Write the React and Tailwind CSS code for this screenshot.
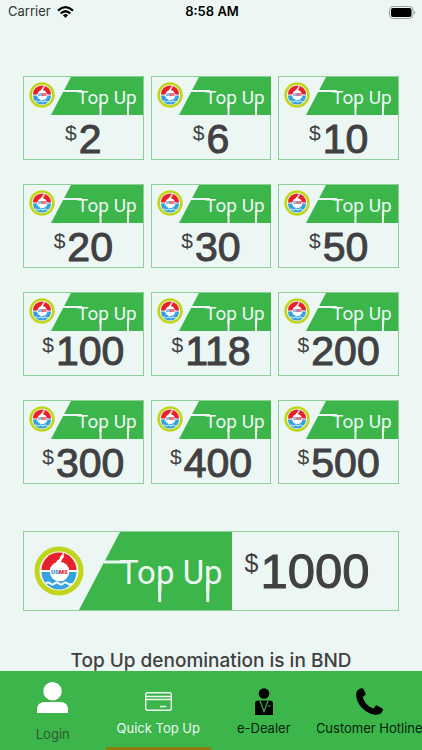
import React from "react";

const rows = [
  { amounts: [2, 6, 10], pad: "pt-1" },
  { amounts: [20, 30, 50], pad: "pt-1" },
  { amounts: [100, 118, 200], pad: "pb-1" },
  { amounts: [300, 400, 500], pad: "pt-1" },
];

function Logo({ className }) {
  return (
    <svg viewBox="0 0 50 50" className={className} role="img" aria-label="USMS logo">
      <circle cx="25" cy="25" r="22" fill="#fbfdf4" stroke="#c0d51b" strokeWidth="5" />
      <path d="M7.5 24 A17.5 17.5 0 0 1 42.5 24 Z" fill="#e6212b" />
      <path d="M7.5 26 A17.5 17.5 0 0 0 42.5 26 Z" fill="#35a1df" />
      <path
        d="M12 37.500 q2 -2 4.300 0 t4.300 0 t4.300 0 t4.300 0 t4.300 0 t4.300 0"
        fill="none"
        stroke="#ffffff"
        strokeWidth="1.800"
      />
      <circle cx="25.500" cy="25.500" r="9.800" fill="#ffffff" />
      <path d="M22 17 C23 13 26 14 26 11 L30 6 C29 10 31 11 28 13 C29 15 25 15 27 18 Z" fill="#ffffff" />
      <text
        x="25.500"
        y="27.500"
        textAnchor="middle"
        fontFamily="Roboto, 'Liberation Sans', sans-serif"
        fontWeight="900"
        fontSize="6"
      >
        <tspan fill="#2b8fd0">US</tspan>
        <tspan fill="#e6212b">MS</tspan>
      </text>
    </svg>
  );
}

function SmallBanner() {
  return (
    <svg viewBox="0 0 92 38" className="h-[38px] w-[92px] shrink-0">
      <path d="M20 0 H92 V38 H0 Z" fill="#3cb54a" />
      <path d="M12 14 H31" stroke="#ecf7f4" strokeWidth="2" />
      <path d="M49.500 26 V38 M77 26 V38" stroke="#ecf7f4" strokeWidth="2" />
      <text x="26" y="27" fill="#ecf7f4" fontFamily="Roboto, 'Liberation Sans', sans-serif" fontSize="19">
        Top Up
      </text>
    </svg>
  );
}

function LargeBanner() {
  return (
    <svg viewBox="0 0 153 78" className="h-[78px] w-[153px] shrink-0">
      <path d="M41 0 H153 V78 H0 Z" fill="#3cb54a" />
      <path d="M25 30 H50" stroke="#ecf7f4" strokeWidth="3" />
      <path d="M80.700 50 V70 M128.800 50 V70" stroke="#ecf7f4" strokeWidth="3" />
      <text x="40" y="52" fill="#ecf7f4" fontFamily="Roboto, 'Liberation Sans', sans-serif" fontSize="33">
        Top Up
      </text>
    </svg>
  );
}

function TopUpCard({ amount, pad }) {
  return (
    <button type="button" className="flex h-[84px] flex-col border border-[#8fcf97] text-[#414042]">
      <span className="flex w-full justify-between">
        <Logo className="-mr-1 ml-[5px] mt-[5px] h-[26px] w-[26px] shrink-0" />
        <SmallBanner />
      </span>
      <span className={`flex w-full flex-1 items-center justify-center gap-0.5 font-['Liberation_Sans',Arial,sans-serif] ${pad}`}>
        <span className="mb-3 text-[21px] leading-5">$</span>
        <span className="text-[41px] leading-[40px] [-webkit-text-stroke:1px_#414042]">{amount}</span>
      </span>
    </button>
  );
}

function WifiIcon() {
  return (
    <svg viewBox="0 0 17 12" className="h-3 w-[17px]" aria-label="Wi-Fi">
      <g fill="none" stroke="#000" strokeWidth="2.200">
        <path d="M1 4.600 Q8.500 -2.200 16 4.600" />
        <path d="M3.700 7.500 Q8.500 3 13.300 7.500" />
      </g>
      <path d="M8.500 12 L5.900 9.200 Q8.500 7 11.100 9.200 Z" />
    </svg>
  );
}

function BatteryIcon() {
  return (
    <svg viewBox="0 0 27 13" className="h-[13px] w-[27px]" aria-label="Battery full">
      <rect x="0.500" y="0.500" width="23.500" height="12" rx="3.500" fill="none" stroke="#9da3a1" />
      <rect x="2" y="2" width="20.500" height="9" rx="2" />
      <path d="M25.300 4.500 Q27.500 6.500 25.300 8.500 Z" fill="#9da3a1" />
    </svg>
  );
}

function Tab({ icon, label, text, active, low }) {
  return (
    <button
      type="button"
      className={`flex min-w-0 flex-col items-center overflow-hidden border-b-[3px] ${active ? "border-[#8a7f0c]" : "border-transparent"} ${low ? "pt-2.5" : "pt-4"}`}
    >
      <span className={`flex items-center justify-center ${low ? "h-8" : "h-7"}`}>{icon}</span>
      <span className={`whitespace-nowrap text-[13px] leading-[18px] ${text} ${low ? "mt-3" : "mt-1"}`}>{label}</span>
    </button>
  );
}

export default function App() {
  return (
    <div className="flex h-screen flex-col overflow-hidden bg-[#ecf7f4] font-['Inter','Liberation_Sans',sans-serif]">
      <header className="grid h-6 shrink-0 grid-cols-3 items-center pl-2 pr-1.5 text-[13px] text-black">
        <span className="flex items-center gap-1.5 text-[#333]">
          Carrier
          <WifiIcon />
        </span>
        <span className="text-center font-semibold">8:58 AM</span>
        <span className="flex justify-end">
          <BatteryIcon />
        </span>
      </header>

      <main className="min-h-0 flex-1 overflow-hidden px-[23px] pt-[52px]">
        <div className="flex flex-col gap-6">
          {rows.map((row) => (
            <div key={row.amounts[0]} className="grid grid-cols-3 gap-[7px]">
              {row.amounts.map((amount) => (
                <TopUpCard key={amount} amount={amount} pad={row.pad} />
              ))}
            </div>
          ))}
        </div>

        <button type="button" className="mt-[47px] flex h-20 w-full items-center border border-[#8fcf97] text-[#414042]">
          <Logo className="ml-2.5 h-[50px] w-[50px] shrink-0" />
          <span className="-ml-[5px] flex">
            <LargeBanner />
          </span>
          <span className="flex flex-1 items-center justify-center gap-0.5 pr-4 font-['Liberation_Sans',Arial,sans-serif]">
            <span className="mb-4 text-[25px] leading-6">$</span>
            <span className="text-[49px] leading-[52px] [-webkit-text-stroke:1px_#414042]">1000</span>
          </span>
        </button>

        <p className="mt-9 whitespace-nowrap text-center text-[19px] font-medium leading-7 text-[#414042]">
          Top Up denomination is in BND
        </p>
      </main>

      <nav className="grid h-[79px] shrink-0 grid-cols-4 bg-[#3cb54a]">
        <Tab
          low
          label="Login"
          text="text-[#2c5a34]"
          icon={
            <svg viewBox="0 0 31 31" className="h-[31px] w-[31px]" fill="#ffffff">
              <circle cx="15.500" cy="9.200" r="9.200" />
              <path d="M0 31 V28 Q0 20 8 20 H23 Q31 20 31 28 V31 Z" />
            </svg>
          }
        />
        <Tab
          active
          label="Quick Top Up"
          text="text-[#ecf7f4]"
          icon={
            <svg viewBox="0 0 27 19" className="h-[19px] w-[27px]" fill="none" stroke="#ecf7f4">
              <rect x="0.700" y="0.700" width="25.600" height="17.600" rx="1.500" strokeWidth="1.400" />
              <path d="M1 4.500 H26 M1 7.500 H26 M15 14.500 H21.500" strokeWidth="1.400" />
            </svg>
          }
        />
        <Tab
          label="e-Dealer"
          text="text-[#03240a]"
          icon={
            <svg viewBox="0 0 18 27" className="h-[27px] w-[18px]">
              <circle cx="9" cy="5.500" r="5.300" />
              <path d="M0 27 V15 Q0 13 2 12.800 L5 12.500 H13 L16 12.800 Q18 13 18 15 V27 Z" />
              <path d="M5 12.500 L9 23.500 L13 12.500" fill="none" stroke="#3cb54a" strokeWidth="1.200" />
              <path d="M8 13.500 H10 L10.500 18 L9 21 L7.500 18 Z" />
              <path d="M12.500 18 H15.500" stroke="#3cb54a" strokeWidth="1" />
            </svg>
          }
        />
        <Tab
          label="Customer Hotline"
          text="text-[#03240a]"
          icon={
            <svg viewBox="0 0 27 27" className="h-[27px] w-[27px]">
              <path d="M5.500 0.300 C6.500 0 7.200 0.400 7.700 1.500 L9.400 5 C9.900 6.200 9.500 7 8.600 7.600 L7.300 8.500 C6.800 9 6.800 9.500 7 10.200 C8.500 14.500 12 18.300 16.300 20.100 C17.200 20.500 17.700 20.400 18.200 19.700 L19.200 18.300 C19.800 17.500 20.500 17.400 21.400 17.800 L26 20.200 C27 20.800 27.200 21.500 26.800 22.500 C25.500 25.700 22.500 27.200 19 26.800 C9.500 25.800 0.500 16.500 0.100 7 C0 3.500 2 1 5.500 0.300 Z" />
            </svg>
          }
        />
      </nav>
    </div>
  );
}
